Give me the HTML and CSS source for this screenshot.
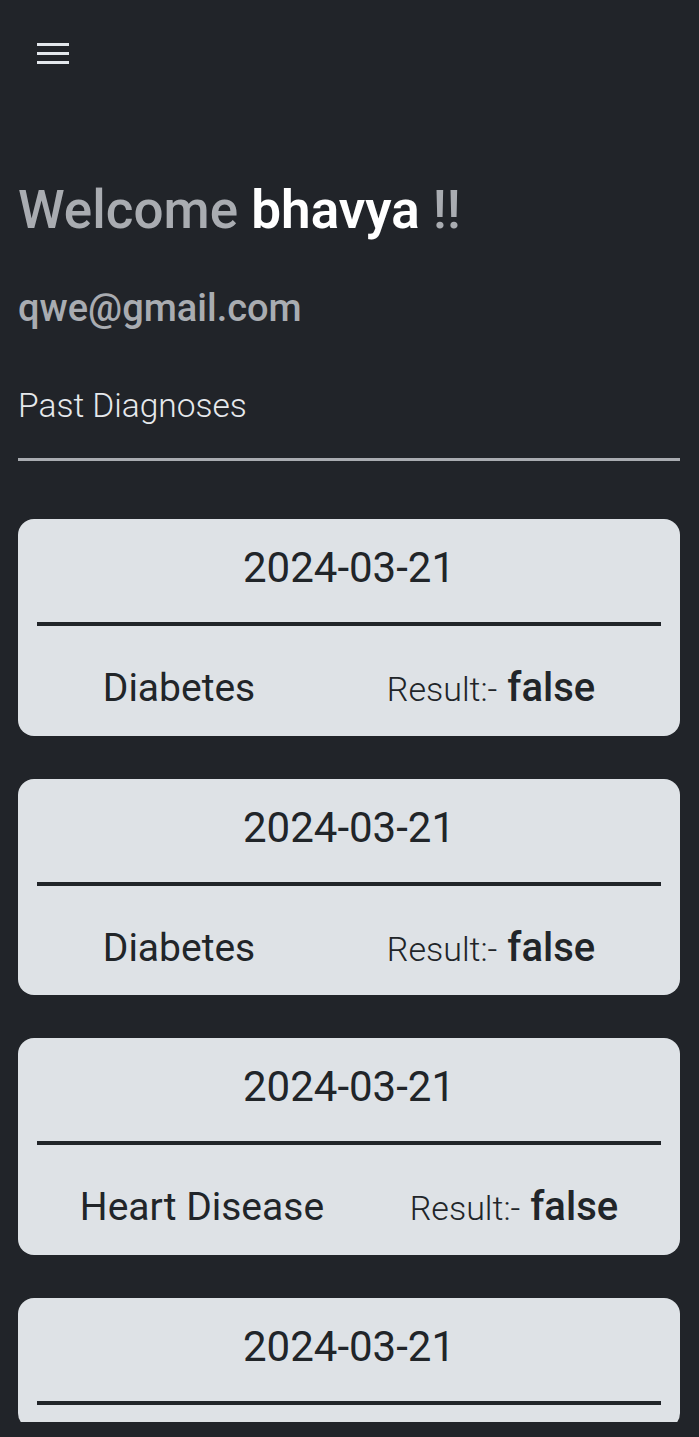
FILE: index.html
```html
<!DOCTYPE html>
<html lang="en">
<head>
<meta charset="utf-8">
<title>Profile</title>
<link rel="stylesheet" href="styles.css">
</head>
<body>
<div class="page">
  <nav class="topbar">
    <button class="menu-btn" aria-label="Menu">
      <span class="bar"></span><span class="bar"></span><span class="bar"></span>
    </button>
  </nav>
  <header class="intro">
    <h1 class="welcome">Welcome <span class="name">bhavya</span> !!</h1>
    <h2 class="email">qwe@gmail.com</h2>
    <h3 class="section-title">Past Diagnoses</h3>
    <hr class="divider">
  </header>
  <main class="list">
    <section class="card">
      <div class="date">2024-03-21</div>
      <hr class="card-line">
      <div class="row"><span class="disease">Diabetes</span><span class="result"><span class="label">Result:-</span> <b>false</b></span></div>
    </section>
    <section class="card">
      <div class="date">2024-03-21</div>
      <hr class="card-line">
      <div class="row"><span class="disease">Diabetes</span><span class="result"><span class="label">Result:-</span> <b>false</b></span></div>
    </section>
    <section class="card">
      <div class="date">2024-03-21</div>
      <hr class="card-line">
      <div class="row"><span class="disease">Heart Disease</span><span class="result"><span class="label">Result:-</span> <b>false</b></span></div>
    </section>
    <section class="card">
      <div class="date">2024-03-21</div>
      <hr class="card-line">
    </section>
  </main>
</div>
</body>
</html>
```

FILE: styles.css
```css
* { box-sizing: border-box; }
html, body {
  margin: 0;
  padding: 0;
  background: #212429;
}
body {
  font-family: Roboto, "Noto Sans", sans-serif;
  color: #212529;
}
.page {
  height: 1437px;
  display: flex;
  flex-direction: column;
  padding: 0 19px 0 18px;
}
.topbar {
  display: flex;
  flex-shrink: 0;
  padding: 43px 0 0 19px;
  height: 177px;
}
.menu-btn {
  width: 32px;
  height: 21px;
  padding: 0;
  border: 0;
  background: transparent;
  display: flex;
  flex-direction: column;
  justify-content: space-between;
}
.bar {
  display: block;
  width: 32px;
  height: 3px;
  background: #e3e7ec;
}
.intro {
  display: flex;
  flex-direction: column;
  flex-shrink: 0;
}
.welcome {
  margin: 0;
  font-size: 53px;
  line-height: 67px;
  font-weight: 500;
  color: #a9acb1;
}
.name {
  color: #ffffff;
  font-weight: 600;
}
.email {
  margin: 0;
  padding-top: 40px;
  font-size: 38px;
  line-height: 48px;
  font-weight: 500;
  color: #a9acb1;
}
.section-title {
  margin: 0;
  padding-top: 54px;
  font-size: 33.5px;
  line-height: 40px;
  font-weight: 300;
  color: #e6e9ec;
}
.divider {
  flex-shrink: 0;
  margin: 32px 0 0 0;
  border: 0;
  height: 3px;
  background: #a9acb1;
}
.list {
  flex: 1;
  overflow: hidden;
  margin-top: 58px;
  margin-bottom: 15px;
  display: flex;
  flex-direction: column;
  gap: 43px;
}
.card {
  flex-shrink: 0;
  background: #dee2e6;
  border-radius: 16px;
  padding: 24px 19px 24.5px 19px;
  display: flex;
  flex-direction: column;
}
.date {
  text-align: center;
  font-size: 42px;
  line-height: 49px;
  font-weight: 400;
}
.card-line {
  flex-shrink: 0;
  margin: 30px 0 0 0;
  border: 0;
  height: 4px;
  background: #212529;
}
.row {
  margin-top: 38px;
  height: 47px;
  display: flex;
  justify-content: space-around;
  align-items: baseline;
  line-height: 47px;
}
.disease {
  font-size: 39px;
  font-weight: 400;
}
.result {
  font-size: 40px;
  line-height: 47px;
}
.label {
  font-size: 34px;
  font-weight: 300;
}
.result b {
  font-weight: 500;
}
```
